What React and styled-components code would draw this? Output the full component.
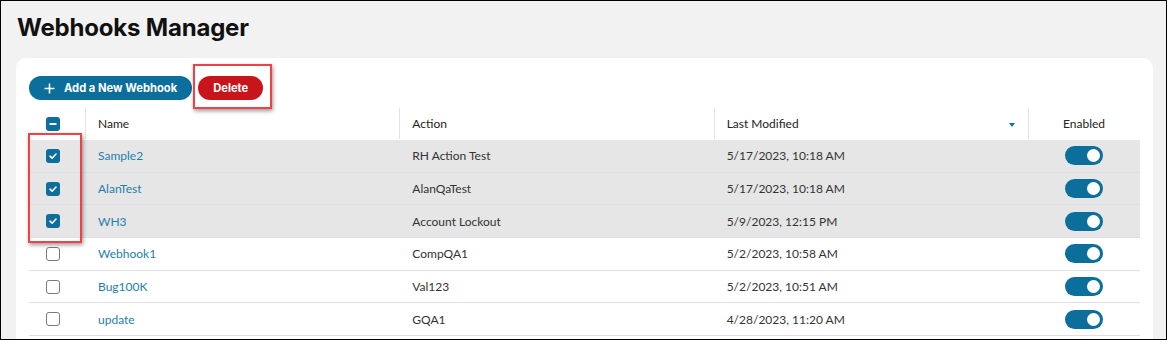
import React, { useState } from "react";
import styled, { createGlobalStyle } from "styled-components";

const GlobalStyle = createGlobalStyle`
  html, body {
    margin: 0;
    padding: 0;
    overflow: hidden;
  }
  body {
    font-family: Lato, "Open Sans", sans-serif;
  }
`;

const Page = styled.div`
  box-sizing: border-box;
  width: 1167px;
  height: 340px;
  border: 1px solid #000;
  background: #f2f2f2;
  padding: 11px 13px 0 15px;
  overflow: hidden;
`;

const Title = styled.h1`
  margin: 0 0 15px 1px;
  font-family: Inter, "Liberation Sans", sans-serif;
  font-size: 24px;
  font-weight: 700;
  line-height: 31px;
  color: #111;
  letter-spacing: -0.2px;
`;

const Card = styled.div`
  position: relative;
  background: #fff;
  border-radius: 10px 10px 0 0;
  padding: 18px 13px 0 13px;
  min-height: 300px;
`;

const Toolbar = styled.div`
  display: flex;
  gap: 6px;
  margin-bottom: 7px;
`;

const PillButton = styled.button`
  display: inline-flex;
  align-items: center;
  gap: 9px;
  height: 24px;
  border: none;
  border-radius: 12px;
  padding: ${(p) => (p.$icon ? "0 15px 0 15px" : "0 15px")};
  background: ${(p) => p.$bg};
  color: #fff;
  font-family: Inter, "Liberation Sans", sans-serif;
  font-size: 11.2px;
  font-weight: 700;
  cursor: pointer;
`;

const Highlight = styled.div`
  position: absolute;
  left: ${(p) => p.$left}px;
  top: ${(p) => p.$top}px;
  width: ${(p) => p.$width}px;
  height: ${(p) => p.$height}px;
  box-sizing: border-box;
  border: 2px solid #ef4146;
  box-shadow: 1px 2px 4px rgba(0, 0, 0, 0.4);
  pointer-events: none;
`;

const Grid = styled.div`
  display: grid;
  grid-template-columns: 56px 1fr 1fr 1fr 112px;
`;

const HeaderRow = styled(Grid)`
  height: 33px;
`;

const HeaderCell = styled.div`
  display: flex;
  align-items: center;
  justify-content: ${(p) => (p.$center ? "center" : "flex-start")};
  padding-left: ${(p) => (p.$center ? 0 : 13)}px;
  padding-right: ${(p) => (p.$sort ? 13 : 0)}px;
  font-size: 12px;
  color: #222;
  position: relative;
  ${(p) =>
    p.$divider &&
    `
    &::before {
      content: "";
      position: absolute;
      left: 0;
      top: 1px;
      bottom: 1px;
      width: 1px;
      background: #e3e3e3;
    }
  `}
`;

const CheckCell = styled.div`
  display: flex;
  align-items: center;
  padding-left: 17px;
`;

const Row = styled(Grid)`
  height: 32.7px;
  box-sizing: border-box;
  border-bottom: 1px solid #dedfe4;
  background: ${(p) => (p.$selected ? "#e6e6e6" : "#fff")};
`;

const Cell = styled.div`
  display: flex;
  align-items: center;
  justify-content: ${(p) => (p.$center ? "center" : "flex-start")};
  padding-left: ${(p) => (p.$center ? 0 : 13)}px;
  font-size: 12px;
  color: ${(p) => (p.$link ? "#1f7eac" : "#333")};
`;

const Box = styled.span`
  box-sizing: border-box;
  display: inline-flex;
  align-items: center;
  justify-content: center;
  width: 14px;
  height: 14px;
  border-radius: 3px;
  background: ${(p) => (p.$on ? "#0b6e9b" : "#fff")};
  border: ${(p) => (p.$on ? "none" : "1.5px solid #7a7a7a")};
  cursor: pointer;
`;

const SortArrow = styled.span`
  margin-left: auto;
  width: 0;
  height: 0;
  border-left: 3.5px solid transparent;
  border-right: 3.5px solid transparent;
  border-top: 4px solid #0b74a6;
  margin-top: 3px;
`;

const Toggle = styled.span`
  box-sizing: border-box;
  display: inline-flex;
  align-items: center;
  justify-content: flex-end;
  width: 38px;
  height: 19px;
  border-radius: 10px;
  background: #0b6e9b;
  padding-right: 3px;
  &::after {
    content: "";
    width: 13px;
    height: 13px;
    border-radius: 50%;
    background: #fff;
  }
`;

const rows = [
  { name: "Sample2", action: "RH Action Test", modified: "5/17/2023, 10:18 AM" },
  { name: "AlanTest", action: "AlanQaTest", modified: "5/17/2023, 10:18 AM" },
  { name: "WH3", action: "Account Lockout", modified: "5/9/2023, 12:15 PM" },
  { name: "Webhook1", action: "CompQA1", modified: "5/2/2023, 10:58 AM" },
  { name: "Bug100K", action: "Val123", modified: "5/2/2023, 10:51 AM" },
  { name: "update", action: "GQA1", modified: "4/28/2023, 11:20 AM" },
];

function Checkbox({ state, onClick }) {
  return (
    <Box $on={state !== "off"} onClick={onClick}>
      {state === "on" && (
        <svg width="10" height="10" viewBox="0 0 10 10">
          <path d="M2 5.2 L4.1 7.2 L8 3" fill="none" stroke="#fff" strokeWidth="1.6" strokeLinecap="round" strokeLinejoin="round" />
        </svg>
      )}
      {state === "some" && (
        <svg width="10" height="10" viewBox="0 0 10 10">
          <path d="M2.2 5 H7.8" stroke="#fff" strokeWidth="1.8" strokeLinecap="round" />
        </svg>
      )}
    </Box>
  );
}

export default function App() {
  const [selected, setSelected] = useState(["Sample2", "AlanTest", "WH3"]);

  const toggle = (name) =>
    setSelected((s) => (s.includes(name) ? s.filter((n) => n !== name) : [...s, name]));

  const headState =
    selected.length === 0 ? "off" : selected.length === rows.length ? "on" : "some";

  return (
    <Page>
      <GlobalStyle />
      <Title>Webhooks Manager</Title>
      <Card>
        <Toolbar>
          <PillButton $bg="#0b6e9b" $icon>
            <svg width="11" height="11" viewBox="0 0 11 11">
              <path d="M5.5 0.5 V10.5 M0.5 5.5 H10.5" stroke="#fff" strokeWidth="1.6" />
            </svg>
            Add a New Webhook
          </PillButton>
          <PillButton $bg="#c8151c">Delete</PillButton>
        </Toolbar>

        <HeaderRow>
          <CheckCell>
            <Checkbox
              state={headState}
              onClick={() => setSelected(headState === "off" ? rows.map((r) => r.name) : [])}
            />
          </CheckCell>
          <HeaderCell $divider>Name</HeaderCell>
          <HeaderCell $divider>Action</HeaderCell>
          <HeaderCell $divider $sort>
            Last Modified
            <SortArrow />
          </HeaderCell>
          <HeaderCell $divider $center>Enabled</HeaderCell>
        </HeaderRow>

        {rows.map((r) => {
          const on = selected.includes(r.name);
          return (
            <Row key={r.name} $selected={on}>
              <CheckCell>
                <Checkbox state={on ? "on" : "off"} onClick={() => toggle(r.name)} />
              </CheckCell>
              <Cell $link>{r.name}</Cell>
              <Cell>{r.action}</Cell>
              <Cell>{r.modified}</Cell>
              <Cell $center>
                <Toggle />
              </Cell>
            </Row>
          );
        })}

        <Highlight $left={177} $top={6} $width={79} $height={45} />
        <Highlight $left={12} $top={75} $width={54} $height={110} />
      </Card>
    </Page>
  );
}
